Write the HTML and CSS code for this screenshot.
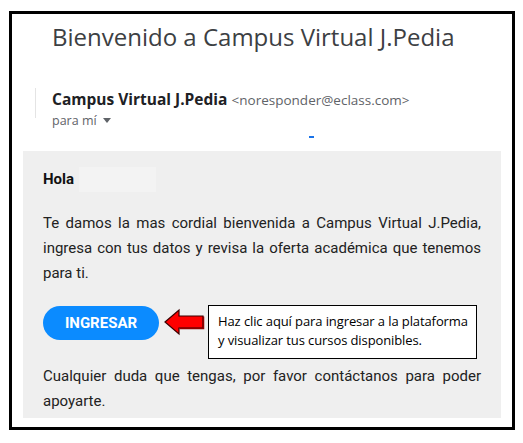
FILE: index.html
```html
<!DOCTYPE html>
<html lang="es">
<head>
    <meta charset="UTF-8">
    <meta name="viewport" content="width=device-width, initial-scale=1.0">
    <title>Bienvenido a Campus Virtual J.Pedia</title>
    <link rel="stylesheet" href="styles.css">
</head>
<body>
    <div class="frame">
        <h1 class="subject">Bienvenido a Campus Virtual J.Pedia</h1>

        <div class="sender">
            <div class="sender-line">
                <span class="sender-name">Campus Virtual J.Pedia</span>
                <span class="sender-mail">&lt;noresponder@eclass.com&gt;</span>
            </div>
            <div class="to-line">para mí <span class="caret"></span></div>
            <div class="marker"></div>
        </div>

        <div class="mail-body">
            <p class="hello">Hola<span class="name-blank"></span></p>

            <p class="text">Te damos la mas cordial bienvenida a Campus Virtual J.Pedia, ingresa con tus datos y revisa la oferta académica que tenemos para ti.</p>

            <div class="action-row">
                <a class="btn" href="#">INGRESAR</a>
                <svg class="arrow" width="42" height="28" viewBox="0 0 42 28">
                    <!-- block arrow pointing at the button -->
                    <path d="M2 14 L16 2 L16 8 L40 8 L40 20 L16 20 L16 26 Z" fill="#ff0000" stroke="#3a0000" stroke-width="1.2" stroke-linejoin="miter"/>
                    <path d="M17 20.5 L40.5 20.5 L40.5 8.5" fill="none" stroke="#8a0000" stroke-width="1.5"/>
                </svg>
                <div class="note">Haz clic aquí para ingresar a la plataforma y visualizar tus cursos disponibles.</div>
            </div>

            <p class="text last">Cualquier duda que tengas, por favor contáctanos para poder apoyarte.</p>
        </div>
    </div>
</body>
</html>
```

FILE: styles.css
```css
body {
    margin: 0;
    background: #fff;
    font-family: Roboto, "Liberation Sans", Arial, sans-serif;
}
.frame {
    margin: 11px 0 0 9px;
    width: 478px;
    height: 413px;
    border: 3px solid #000;
    background: #fff;
    padding: 0 11px;
}
.subject {
    margin: 0;
    padding: 7px 0 0 29px;
    font-family: "Open Sans", Roboto, sans-serif;
    font-weight: 400;
    font-size: 24px;
    line-height: 32px;
    color: #3c4043;
}
.sender {
    position: relative;
    padding: 36px 0 0 29px;
    height: 98px;
    box-sizing: border-box;
    font-family: "Open Sans", Roboto, sans-serif;
}
.sender::before {
    content: "";
    position: absolute;
    left: 12px;
    top: 35px;
    width: 1px;
    height: 30px;
    background: #e4e4e4;
}
.sender-line {
    line-height: 20px;
}
.sender-name {
    font-weight: 700;
    font-size: 15.5px;
    color: #202124;
}
.sender-mail {
    font-size: 13.5px;
    color: #5f6368;
}
.to-line {
    font-size: 12.5px;
    line-height: 22px;
    color: #5f6368;
}
.caret {
    display: inline-block;
    margin-left: 3px;
    vertical-align: 2px;
    border-left: 4px solid transparent;
    border-right: 4px solid transparent;
    border-top: 5px solid #5f6368;
}
.marker {
    position: absolute;
    left: 286px;
    top: 83px;
    width: 5px;
    height: 2px;
    background: #1a73e8;
}
.mail-body {
    background: #efefef;
    padding: 16px 20px 4px 20px;
    height: 267px;
    box-sizing: border-box;
    color: #222;
}
.hello {
    margin: 0;
    font-weight: 700;
    font-size: 15px;
    line-height: 25px;
    color: #111;
    display: flex;
    align-items: center;
}
.name-blank {
    display: inline-block;
    margin-left: 5px;
    width: 77px;
    height: 25px;
    background: #f3f3f3;
}
.text {
    margin: 19px 0 0 0;
    font-size: 15px;
    line-height: 25px;
    text-align: justify;
}
.action-row {
    display: flex;
    align-items: flex-start;
    margin-top: 19px;
}
.btn {
    margin-top: 1px;
    width: 116px;
    height: 34px;
    border-radius: 17px;
    background: #0b8bff;
    color: #fff;
    font-weight: 700;
    font-size: 15px;
    line-height: 34px;
    text-align: center;
    text-decoration: none;
}
.arrow {
    margin: 3px 0 0 4px;
}
.note {
    margin-left: 3px;
    width: 269px;
    height: 54px;
    box-sizing: border-box;
    border: 1px solid #000;
    background: #fff;
    padding: 6px 6px 0 9px;
    font-family: "Open Sans", "Liberation Sans", sans-serif;
    font-size: 13px;
    line-height: 19px;
    color: #000;
    letter-spacing: -0.1px;
}
.last {
    margin-top: 5px;
}
```
